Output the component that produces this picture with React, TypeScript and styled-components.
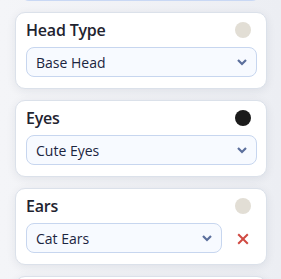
import React from "react";
import styled, { createGlobalStyle } from "styled-components";

const Global = createGlobalStyle`
  html, body { margin: 0; padding: 0; }
  body {
    width: 281px;
    height: 279px;
    overflow: hidden;
    background: linear-gradient(90deg, #f4f5f8 0%, #eceef3 100%);
    font-family: "Open Sans", "Liberation Sans", sans-serif;
  }
`;

const Panel = styled.div`
  display: flex;
  flex-direction: column;
  gap: 11px;
  padding: 0 14px 0 15px;
  margin-top: -10px;
`;

const PrevTail = styled.div`
  height: 10px;
  margin: 0 7px 0 6px;
  border-bottom: 1.5px solid #c9d8f4;
  border-radius: 0 0 8px 8px;
  background: #f3f5f9;
`;

const Card = styled.section`
  background: #ffffff;
  border: 1px solid #dbe1ea;
  border-radius: 10px;
  box-shadow: 0 2px 10px rgba(30, 40, 70, 0.08);
  padding: 8px 9px 9px 10px;
  height: 77px;
  box-sizing: border-box;
  display: flex;
  flex-direction: column;
  gap: 8px;
`;

const Header = styled.div`
  display: flex;
  align-items: center;
  justify-content: space-between;
  height: 18px;
`;

const Title = styled.h3`
  margin: 0;
  font-size: 16px;
  line-height: 18px;
  font-weight: 600;
  color: #1f2430;
  letter-spacing: -0.2px;
`;

const Swatch = styled.span<{ $color: string }>`
  width: 16px;
  height: 16px;
  border-radius: 50%;
  background: ${(p) => p.$color};
  margin-right: 6px;
`;

const Row = styled.div`
  display: flex;
  align-items: center;
  gap: 15px;
`;

const Select = styled.div`
  flex: 1;
  height: 30px;
  box-sizing: border-box;
  border: 1px solid #c7d6ef;
  border-radius: 8px;
  background: #f7faff;
  display: flex;
  align-items: center;
  justify-content: space-between;
  padding: 0 8px 0 9px;
  font-size: 14px;
  color: #1b2540;
`;

const Chevron = () => (
  <svg width="12" height="8" viewBox="0 0 12 8">
    <path d="M2 2 L6 6 L10 2" fill="none" stroke="#5b6f9c" strokeWidth="2.2" />
  </svg>
);

const Remove = styled.button`
  border: none;
  background: none;
  padding: 0;
  width: 12px;
  height: 12px;
  margin: 2px 8px 0 0;
  display: flex;
  align-items: center;
  justify-content: center;
`;

const Cross = () => (
  <svg width="12" height="12" viewBox="0 0 12 12">
    <path d="M1.2 1.2 L10.8 10.8 M10.8 1.2 L1.2 10.8" stroke="#d04a42" strokeWidth="2" />
  </svg>
);

const layers = [
  { title: "Head Type", color: "#e2ded5", value: "Base Head", removable: false },
  { title: "Eyes", color: "#1b1b1b", value: "Cute Eyes", removable: false },
  { title: "Ears", color: "#e2ded5", value: "Cat Ears", removable: true },
];

export default function App() {
  return (
    <>
      <Global />
      <Panel>
        <PrevTail />
        {layers.map((l) => (
          <Card key={l.title}>
            <Header>
              <Title>{l.title}</Title>
              <Swatch $color={l.color} />
            </Header>
            <Row>
              <Select>
                <span>{l.value}</span>
                <Chevron />
              </Select>
              {l.removable && (
                <Remove aria-label="Remove">
                  <Cross />
                </Remove>
              )}
            </Row>
          </Card>
        ))}
        <Card />
      </Panel>
    </>
  );
}
